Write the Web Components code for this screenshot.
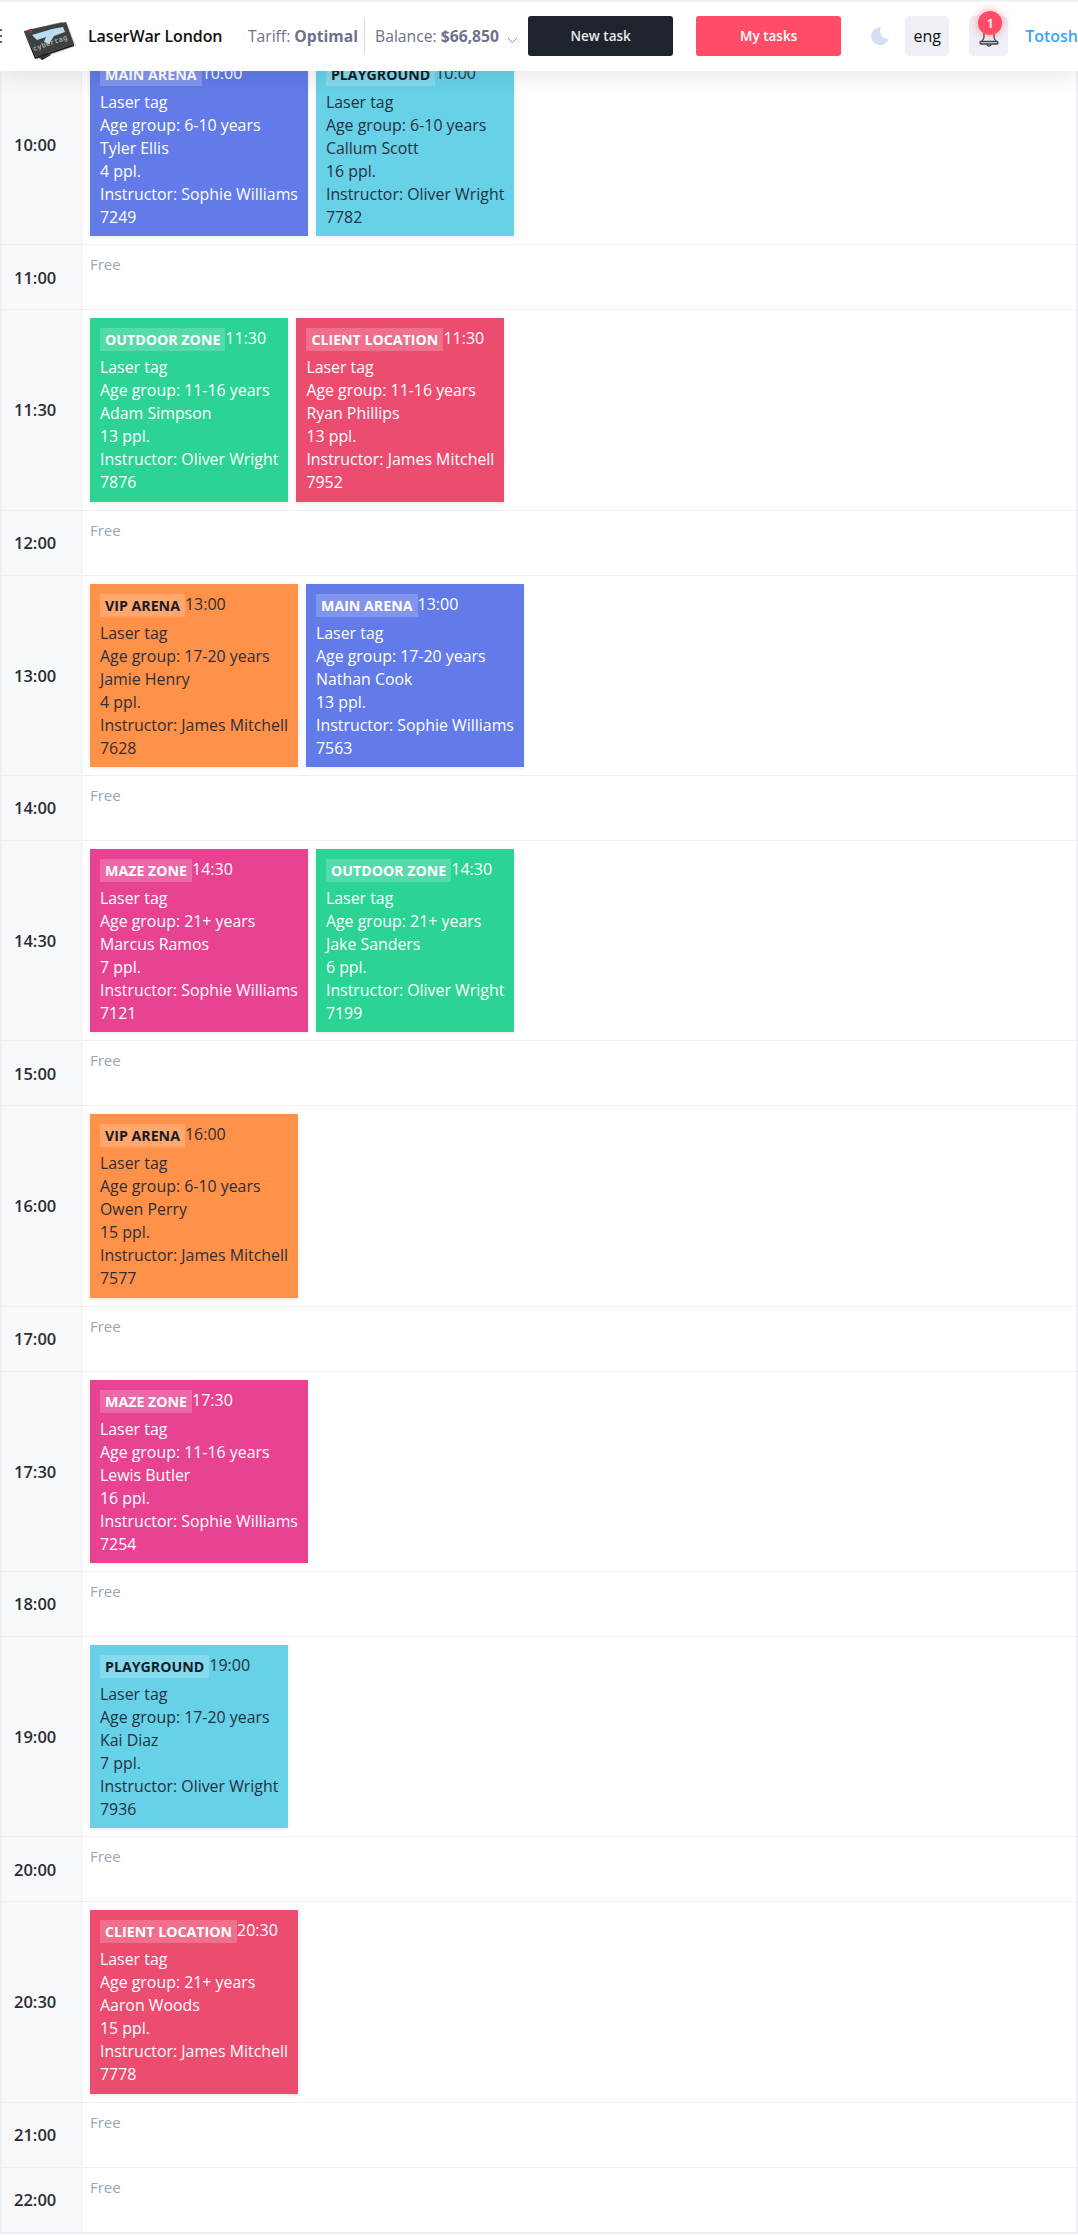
<!DOCTYPE html>
<html>
<head>
<meta charset="utf-8">
<title>LaserWar London</title>
<style>
   html, body { margin: 0; padding: 0; background: #fff; }
   body { font-family: "Open Sans", sans-serif; width: 1078px; height: 2235px; overflow: hidden; position: relative; }
</style>
</head>
<body>
<top-bar></top-bar>
<schedule-table></schedule-table>

<script>
class TopBar extends HTMLElement {
   constructor() {
      super();
      this.shadowDOM = this.attachShadow({ mode: 'open' });
   }

   connectedCallback() {
      this.shadowDOM.innerHTML = `
         <style>
            * { margin: 0; padding: 0; box-sizing: border-box; }
            :host {
               display: flex;
               align-items: center;
               box-sizing: border-box;
               position: absolute;
               z-index: 5;
               top: 0;
               left: 0;
               width: 1078px;
               height: 71px;
               padding-bottom: 1px;
               background: #fff;
               border-top: 2px solid #f1f2f5;
               box-shadow: 0 6px 22px rgba(0, 0, 0, .09);
               overflow: hidden;
               white-space: nowrap;
               font-size: 16px;
               color: #111;
            }
            .dots { width: 2px; display: flex; flex-direction: column; gap: 4px; margin-right: 22px; }
            .dots i { display: block; width: 2px; height: 2px; background: #56657f; }
            .logo { width: 52px; height: 38px; margin: 10px 12px 0 0; flex: none; }
            .name { font-weight: 600; font-size: 16px; width: 161px; letter-spacing: -.1px; }
            .stat { color: #6c7289; font-size: 15.7px; }
            .stat b { font-weight: 700; }
            .tariff { width: 117px; }
            .sep { width: 1px; height: 36px; background: #d9dce3; margin-right: 10px; }
            .balance { width: 133px; }
            .chev { width: 11px; height: 7px; margin-right: 10px; margin-top: 9px; flex: none; }
            .btn {
               height: 40px;
               border-radius: 3px;
               display: flex;
               align-items: center;
               justify-content: center;
               font-size: 13.5px;
               font-weight: 600;
               color: #fff;
               flex: none;
            }
            .new { width: 145px; background: #1f232c; margin-right: 23px; color: #e9eaec; }
            .mine { width: 145px; background: #ff4d67; margin-right: 30px; }
            .moon { width: 18px; height: 18px; margin-right: 16px; flex: none; }
            .square {
               height: 40px;
               background: #eef0f5;
               border-radius: 5px;
               display: flex;
               align-items: center;
               justify-content: center;
               flex: none;
            }
            .lang { width: 44px; margin-right: 20px; font-size: 16px; color: #0d1117; }
            .bell { width: 39px; margin-right: 17px; position: relative; }
            .bell svg { width: 20px; height: 22px; margin-top: 2px; }
            .badge {
               position: absolute;
               top: -5px;
               left: 9px;
               width: 24px;
               height: 24px;
               border-radius: 50%;
               background: #ff4d67;
               box-shadow: 0 0 8px rgba(255, 77, 103, .65);
               color: #fff;
               font-size: 13px;
               font-weight: 600;
               text-align: center;
               line-height: 24px;
            }
            .user { color: #38a6f5; font-weight: 600; font-size: 16px; }
         </style>
         <span class="dots"><i></i><i></i><i></i></span>
         <svg class="logo" viewBox="0 0 52 38">
            <path d="M10 31 L18 38 L27 33 L18 28Z" fill="#111"/>
            <path d="M1 11 L43 1 L52 24 L13 38Z" fill="#8a8a8a" opacity=".4"/>
            <path d="M3 8 L38 0 L44 6 L10 15Z" fill="#6d7378"/>
            <path d="M0 9 L42 0 L50 22 L12 35Z" fill="#3f4042"/>
            <path d="M0 10 L11 37 L50 24 L50 22 L12 35 L0 9Z" fill="#1b1b1b"/>
            <path d="M8 13 L28 7 L39 5 L41 10 L30 14 L25 22 L20 20 L22 15 L13 18Z" fill="#b9dcef"/>
            <circle cx="6" cy="9" r="2" fill="#a33"/>
            <text x="10" y="29" font-size="7" fill="#cfd6da" transform="rotate(-19 10 29)" font-family="Liberation Mono, monospace" letter-spacing=".3">cybertag</text>
         </svg>
         <span class="name">LaserWar London</span>
         <span class="stat tariff">Tariff: <b>Optimal</b></span>
         <span class="sep"></span>
         <span class="stat balance">Balance: <b>$66,850</b></span>
         <svg class="chev" viewBox="0 0 11 7"><path d="M1 1l4.500 4.500L10 1" fill="none" stroke="#8a90a3" stroke-width="1"/></svg>
         <span class="btn new">New task</span>
         <span class="btn mine">My tasks</span>
         <svg class="moon" viewBox="0 0 18 18"><path d="M10.500 0.300A9 9 0 1 0 17.800 11.500 7.300 7.300 0 0 1 10.500 0.300Z" fill="#d6dff2"/></svg>
         <span class="square lang">eng</span>
         <span class="square bell">
            <svg viewBox="0 0 20 22" fill="none" stroke="#3a3f4b" stroke-width="1.300">
               <path d="M5 3v8c0 2-1 3-2.500 4.500M15 3v8c0 2 1 3 2.500 4.500"/>
               <rect x="1" y="15.500" width="18" height="2.500" rx="1.200"/>
               <path d="M8 18.500c0 2 4 2 4 0"/>
            </svg>
            <span class="badge">1</span>
         </span>
         <span class="user">Totosh</span>
      `;
   }
}

class EventCard extends HTMLElement {
   constructor() {
      super();
      this.shadowDOM = this.attachShadow({ mode: 'open' });
   }

   connectedCallback() {
      const a = (n) => this.getAttribute(n);
      this.shadowDOM.innerHTML = `
         <style>
            * { margin: 0; padding: 0; box-sizing: border-box; }
            :host {
               display: block;
               flex: none;
               padding: 10px 10px 7px;
               background: var(--bg);
               color: var(--fg);
               box-shadow: 0 1px 4px rgba(0, 0, 0, .1);
               font-size: 15.9px;
               line-height: 23px;
               white-space: nowrap;
            }
            .head { height: 28px; display: flex; align-items: flex-start; font-size: 16px; }
            .tag {
               height: 23px;
               padding: 0 5px;
               background: rgba(255, 255, 255, .2);
               color: var(--tag);
               font-size: 14.2px;
               font-weight: 700;
               line-height: 24px;
            }
            .time { line-height: 21px; }
         </style>
         <div class="head"><span class="tag">${a('zone')}</span><span class="time">${a('time')}</span></div>
         <div>Laser tag</div>
         <div>Age group: ${a('age')} years</div>
         <div>${a('client')}</div>
         <div>${a('ppl')} ppl.</div>
         <div>Instructor: ${a('instructor')}</div>
         <div>${a('num')}</div>
      `;
   }
}

class ScheduleRow extends HTMLElement {
   constructor() {
      super();
      this.shadowDOM = this.attachShadow({ mode: 'open' });
   }

   connectedCallback() {
      const free = this.hasAttribute('free');
      this.shadowDOM.innerHTML = `
         <style>
            * { margin: 0; padding: 0; box-sizing: border-box; }
            :host {
               display: grid;
               grid-template-columns: 80px 1fr;
               box-sizing: border-box;
               height: ${free ? 65 : 200.33}px;
               border-bottom: 1px solid #edf0f5;
            }
            .hour {
               display: flex;
               align-items: center;
               padding-left: 12px;
               background: #f8f9fb;
               border-right: 1px solid #edf0f5;
               font-size: 16.5px;
               font-weight: 600;
               color: #2a2d33;
            }
            .slot { display: flex; gap: 8px; padding: 8px; }
            .free { font-size: 15px; line-height: 22px; color: #9aa5b5; }
         </style>
         <div class="hour">${this.getAttribute('hour')}</div>
         <div class="slot">${free ? '<span class="free">Free</span>' : '<slot></slot>'}</div>
      `;
   }
}

class ScheduleTable extends HTMLElement {
   constructor() {
      super();
      this.shadowDOM = this.attachShadow({ mode: 'open' });
   }

   connectedCallback() {
      const zones = {
         main: ['MAIN ARENA', '#627be8', '#fff', '#fff'],
         play: ['PLAYGROUND', '#67d1e8', '#253040', '#161c28'],
         out: ['OUTDOOR ZONE', '#2bd395', '#fff', '#fff'],
         client: ['CLIENT LOCATION', '#ed4c71', '#fff', '#fff'],
         vip: ['VIP ARENA', '#ff9149', '#2c2f3a', '#161c28'],
         maze: ['MAZE ZONE', '#e84393', '#fff', '#fff']
      };
      const rows = [
         ['10:00', ['main', '6-10', 'Tyler Ellis', 4, 'Sophie Williams', 7249], ['play', '6-10', 'Callum Scott', 16, 'Oliver Wright', 7782]],
         ['11:00'],
         ['11:30', ['out', '11-16', 'Adam Simpson', 13, 'Oliver Wright', 7876], ['client', '11-16', 'Ryan Phillips', 13, 'James Mitchell', 7952]],
         ['12:00'],
         ['13:00', ['vip', '17-20', 'Jamie Henry', 4, 'James Mitchell', 7628], ['main', '17-20', 'Nathan Cook', 13, 'Sophie Williams', 7563]],
         ['14:00'],
         ['14:30', ['maze', '21+', 'Marcus Ramos', 7, 'Sophie Williams', 7121], ['out', '21+', 'Jake Sanders', 6, 'Oliver Wright', 7199]],
         ['15:00'],
         ['16:00', ['vip', '6-10', 'Owen Perry', 15, 'James Mitchell', 7577]],
         ['17:00'],
         ['17:30', ['maze', '11-16', 'Lewis Butler', 16, 'Sophie Williams', 7254]],
         ['18:00'],
         ['19:00', ['play', '17-20', 'Kai Diaz', 7, 'Oliver Wright', 7936]],
         ['20:00'],
         ['20:30', ['client', '21+', 'Aaron Woods', 15, 'James Mitchell', 7778]],
         ['21:00'],
         ['22:00']
      ];
      const html = rows.map(([hour, ...events]) => {
         if (!events.length) return `<schedule-row free hour="${hour}"></schedule-row>`;
         const cards = events.map(([z, age, client, ppl, instructor, num]) => {
            const [zone, bg, fg, tag] = zones[z];
            return `<event-card style="--bg:${bg};--fg:${fg};--tag:${tag}" zone="${zone}" time="${hour}" age="${age}" client="${client}" ppl="${ppl}" instructor="${instructor}" num="${num}"></event-card>`;
         }).join('');
         return `<schedule-row hour="${hour}">${cards}</schedule-row>`;
      }).join('');
      this.shadowDOM.innerHTML = `
         <style>
            :host {
               display: block;
               box-sizing: border-box;
               width: 1078px;
               padding-top: 45px;
               border-left: 2px solid #edf0f5;
               border-right: 2px solid #edf0f5;
               border-bottom: 1px solid #edf0f5;
            }
         </style>
         ${html}
      `;
   }
}

customElements.define('top-bar', TopBar);
customElements.define('event-card', EventCard);
customElements.define('schedule-row', ScheduleRow);
customElements.define('schedule-table', ScheduleTable);
</script>
</body>
</html>
